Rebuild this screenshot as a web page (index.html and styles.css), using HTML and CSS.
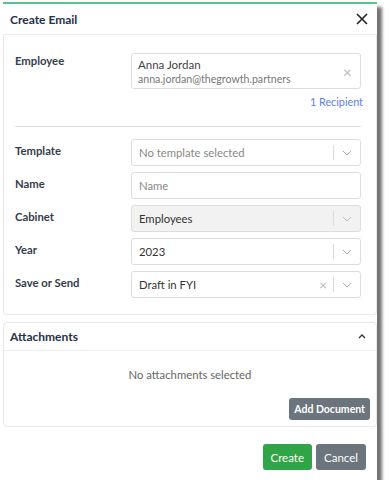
FILE: index.html
```html
<!DOCTYPE html>
<html lang="en">
<head>
    <meta charset="UTF-8">
    <meta name="viewport" content="width=device-width, initial-scale=1.0">
    <title>Create Email</title>
    <link rel="stylesheet" href="styles.css">
</head>
<body>
    <div class="modal">
        <div class="modal-header">
            <h1>Create Email</h1>
            <span class="close">
                <svg width="12" height="12" viewBox="0 0 12 12"><path d="M1 1L11 11M11 1L1 11" stroke="#222" stroke-width="1.6"/></svg>
            </span>
        </div>

        <div class="fields-card">
            <div class="row row-employee">
                <label>Employee</label>
                <div class="employee-box">
                    <div>
                        <div class="emp-name">Anna Jordan</div>
                        <div class="emp-mail">anna.jordan@thegrowth.partners</div>
                    </div>
                    <span class="clear">&times;</span>
                </div>
            </div>
            <div class="recipient">1 Recipient</div>
            <hr class="divider">

            <div class="row">
                <label>Template</label>
                <div class="select">
                    <span class="placeholder">No template selected</span>
                    <span class="sep"></span>
                    <span class="chev"><svg width="10" height="6" viewBox="0 0 10 6"><path d="M1 1L5 5L9 1" fill="none" stroke="#aaa" stroke-width="1"/></svg></span>
                </div>
            </div>
            <div class="row">
                <label>Name</label>
                <div class="select">
                    <span class="placeholder">Name</span>
                </div>
            </div>
            <div class="row">
                <label>Cabinet</label>
                <div class="select disabled">
                    <span class="value">Employees</span>
                    <span class="sep"></span>
                    <span class="chev"><svg width="10" height="6" viewBox="0 0 10 6"><path d="M1 1L5 5L9 1" fill="none" stroke="#bbb" stroke-width="1"/></svg></span>
                </div>
            </div>
            <div class="row">
                <label>Year</label>
                <div class="select">
                    <span class="value">2023</span>
                    <span class="sep"></span>
                    <span class="chev"><svg width="10" height="6" viewBox="0 0 10 6"><path d="M1 1L5 5L9 1" fill="none" stroke="#aaa" stroke-width="1"/></svg></span>
                </div>
            </div>
            <div class="row">
                <label>Save or Send</label>
                <div class="select">
                    <span class="value">Draft in FYI</span>
                    <span class="clear small">&times;</span>
                    <span class="sep"></span>
                    <span class="chev"><svg width="10" height="6" viewBox="0 0 10 6"><path d="M1 1L5 5L9 1" fill="none" stroke="#aaa" stroke-width="1"/></svg></span>
                </div>
            </div>
        </div>

        <div class="attach-card">
            <div class="attach-header">
                <h2>Attachments</h2>
                <svg width="8" height="5" viewBox="0 0 8 5"><path d="M1 4L4 1L7 4" fill="none" stroke="#333" stroke-width="1.4"/></svg>
            </div>
            <div class="attach-body">
                <div class="empty">No attachments selected</div>
                <div class="attach-actions">
                    <button class="btn btn-gray">Add Document</button>
                </div>
            </div>
        </div>

        <div class="modal-footer">
            <button class="btn btn-green btn-lg">Create</button>
            <button class="btn btn-gray btn-lg">Cancel</button>
        </div>
    </div>
</body>
</html>
```

FILE: styles.css
```css
* {
    margin: 0;
    padding: 0;
    box-sizing: border-box;
}

body {
    font-family: 'Lato', 'Open Sans', sans-serif;
    font-size: 11.3px;
    background: white;
    color: #333;
}

.modal {
    margin: 2px 0 0 3px;
    width: 374px;
    background: white;
    border-top: 2px solid #5ac58a;
    box-shadow: 5px 5px 3px rgba(0, 0, 0, 0.55);
}

.modal-header {
    display: flex;
    justify-content: space-between;
    align-items: center;
    height: 31px;
    padding: 0 9px 0 7px;
    border-bottom: 1px solid #eee;
}

.modal-header h1 {
    font-size: 12px;
    font-weight: bold;
    color: #25304a;
}

.close {
    display: flex;
}

.fields-card {
    border: 1px solid #e8e8e8;
    border-top: none;
    border-radius: 0 0 4px 4px;
    padding: 18px 15px 10px 11px;
}

.row {
    display: flex;
    align-items: flex-start;
    margin-bottom: 6px;
}

.row label {
    width: 116px;
    flex-shrink: 0;
    font-weight: bold;
    color: #343d4c;
    padding-top: 5px;
}

.row-employee label {
    padding-top: 1px;
}

.employee-box {
    flex: 1;
    display: flex;
    justify-content: space-between;
    align-items: center;
    border: 1px solid #ddd;
    border-radius: 3px;
    padding: 3px 8px 1px 6px;
    line-height: 15px;
}

.emp-name {
    color: #444;
    font-size: 11.5px;
}

.emp-mail {
    color: #777;
    font-size: 10.6px;
}

.clear {
    color: #bbb;
    font-size: 16px;
    line-height: 1;
}

.clear.small {
    font-size: 14px;
    margin-right: 6px;
}

.recipient {
    text-align: right;
    color: #5b80f0;
    font-size: 10.8px;
    margin: 3px -2px 0 0;
}

.divider {
    border: none;
    border-top: 1px solid #ddd;
    margin: 18px 0 12px;
}

.select {
    flex: 1;
    display: flex;
    align-items: center;
    height: 27px;
    border: 1px solid #ddd;
    border-radius: 3px;
    padding: 0 8px 0 7px;
}

.select.disabled {
    background: #f2f2f2;
}

.placeholder {
    color: #888;
    flex: 1;
}

.value {
    color: #333;
    flex: 1;
}

.sep {
    width: 1px;
    height: 15px;
    background: #ddd;
    margin-right: 8px;
}

.chev {
    display: flex;
}

.attach-card {
    margin-top: 7px;
    border: 1px solid #e8e8e8;
    border-radius: 4px;
}

.attach-header {
    display: flex;
    justify-content: space-between;
    align-items: center;
    height: 28px;
    padding: 0 10px 0 6px;
    border-bottom: 1px solid #eee;
}

.attach-header h2 {
    font-size: 12px;
    font-weight: bold;
    color: #25304a;
}

.attach-body {
    padding: 17px 6px 6px;
}

.empty {
    text-align: center;
    color: #666;
}

.attach-actions {
    display: flex;
    justify-content: flex-end;
    margin-top: 17px;
}

.btn {
    border: none;
    border-radius: 3px;
    color: white;
    font-family: inherit;
    font-size: 10.5px;
    font-weight: bold;
    height: 22px;
    padding: 0 5px;
    cursor: pointer;
}

.btn-gray {
    background: #6c757d;
}

.btn-green {
    background: #2fa548;
}

.btn-lg {
    font-size: 11.5px;
    font-weight: normal;
    height: 26px;
    padding: 0 8px;
}

.modal-footer {
    display: flex;
    justify-content: flex-end;
    gap: 4px;
    padding: 17px 11px 10px;
}
```
